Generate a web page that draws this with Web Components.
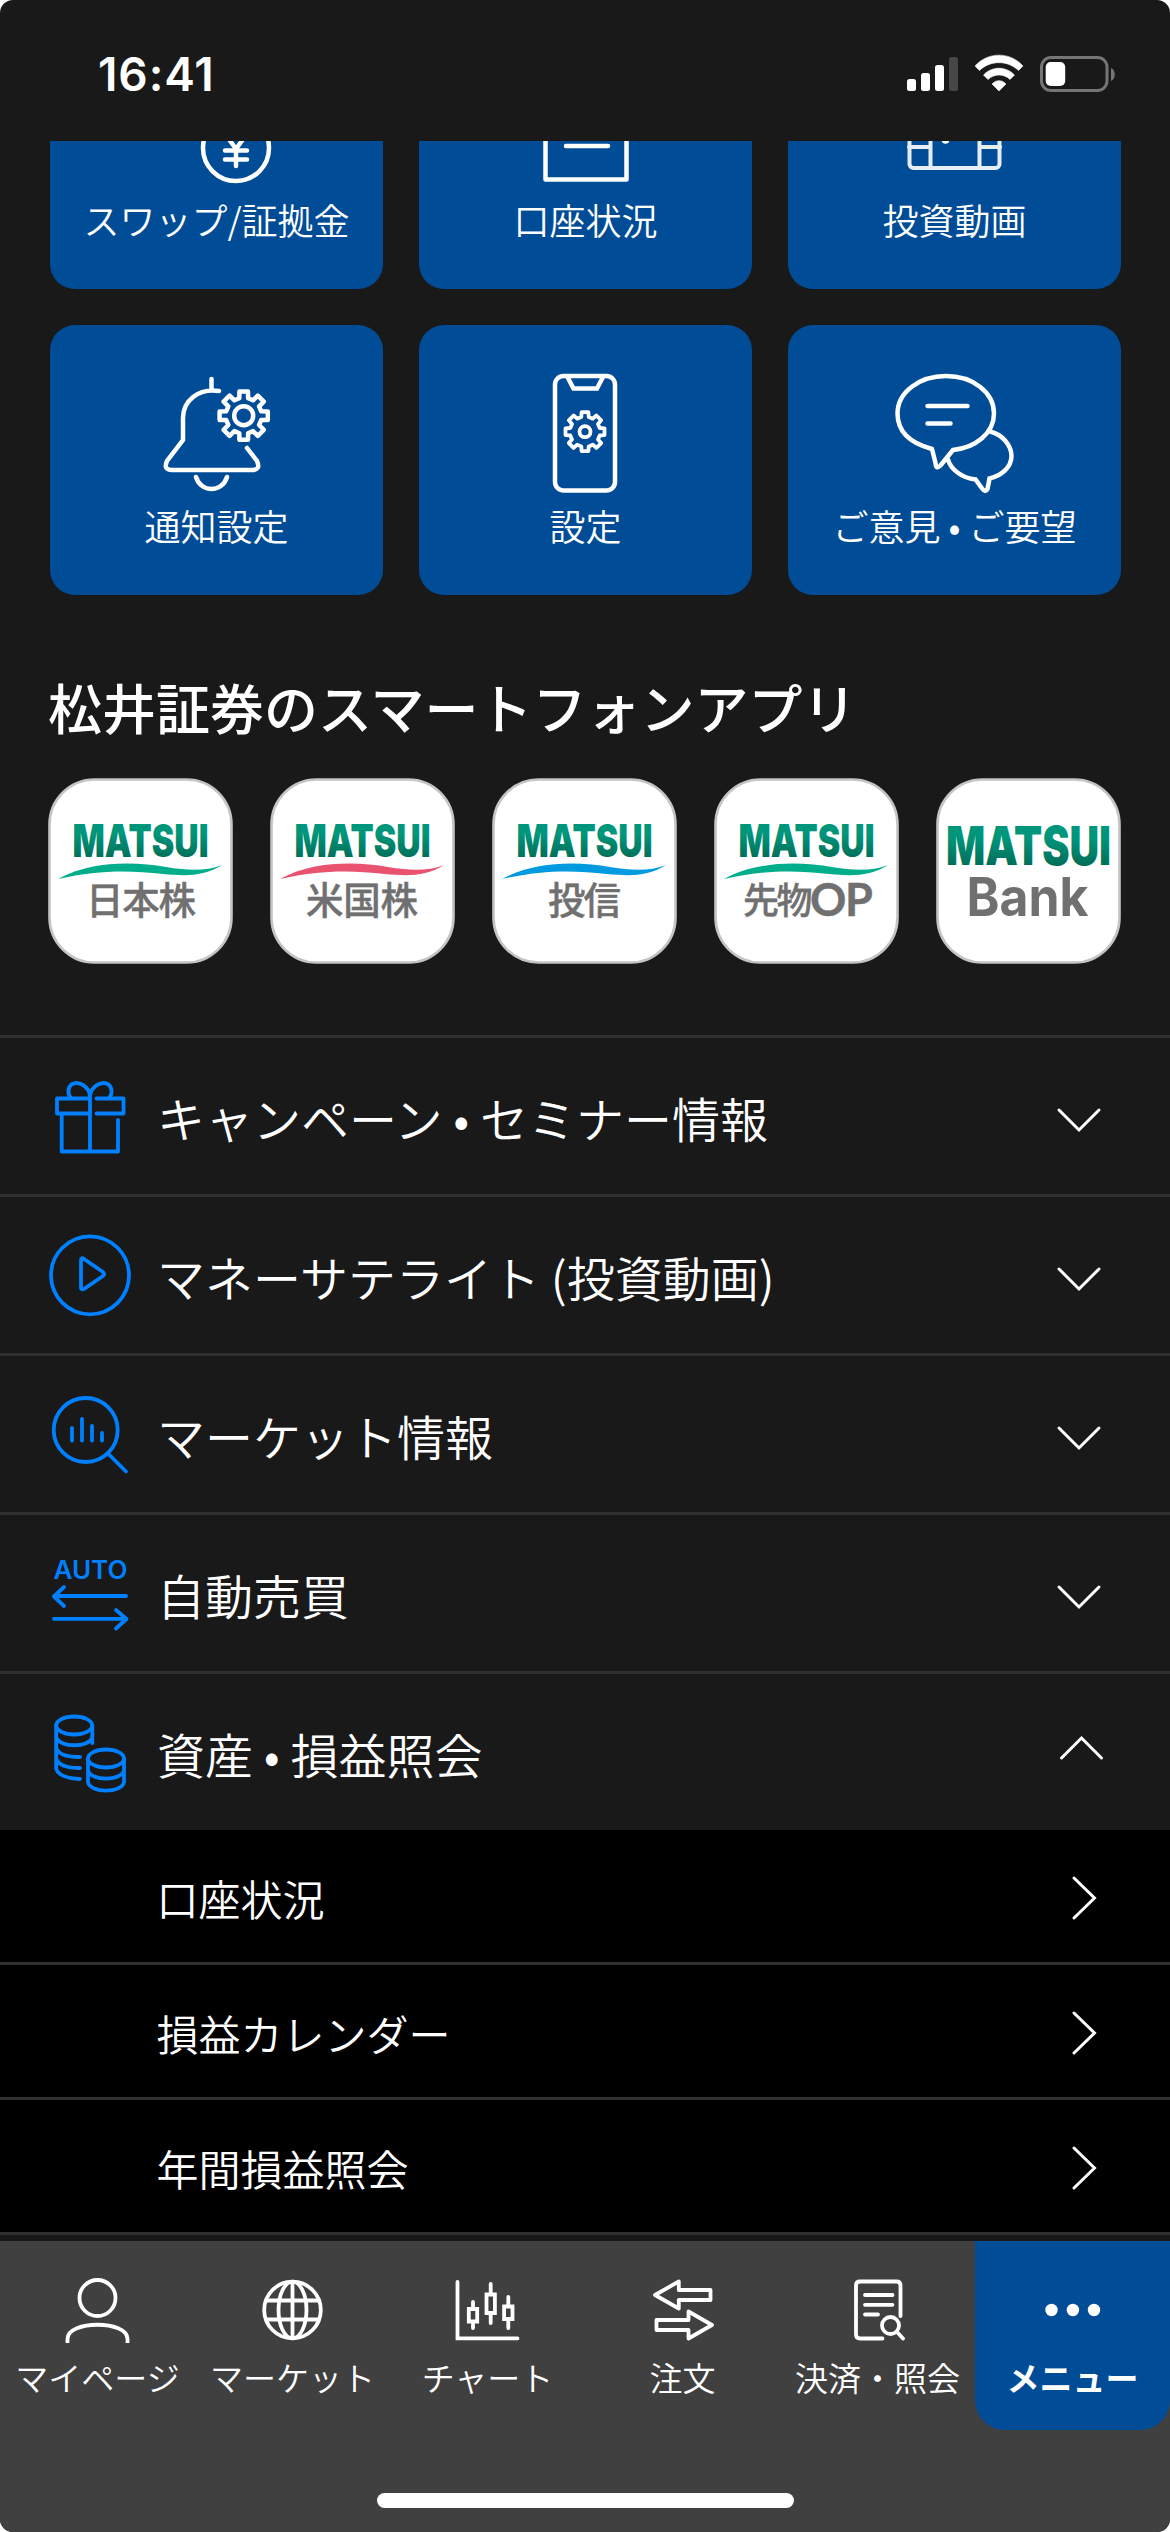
<!DOCTYPE html>
<html lang="ja">
<head>
<meta charset="utf-8">
<title>メニュー</title>
<style>
html,body{margin:0;background:#fff}
body{font-family:"Noto Sans CJK JP","Noto Sans",sans-serif;color:#fff}
</style>
</head>
<body>
<fx-screen>
  <fx-status slot="status" time="16:41"></fx-status>
  <fx-grid>
    <fx-card label="スワップ/証拠金"><svg viewBox="50 19 333 170"><circle cx="236" cy="148" r="33"/><path d="M226 135l10 14 10-14M236 149v17M225 150.500h22M225 159.500h22"/></svg></fx-card>
    <fx-card label="口座状況"><svg viewBox="419 19 333 170"><path d="M545.500 110H626.500V179.500H545.500ZM566 146h42" stroke-linejoin="round"/></svg></fx-card>
    <fx-card label="投資動画"><svg viewBox="788 19 333 170"><g opacity=".9" stroke-width="4"><rect x="909.500" y="100" width="90" height="68" rx="4"/><path d="M930.500 100V168M979.500 100V168M909 147h21M980 147h20"/></g><circle cx="945.500" cy="140" r="1.500"/></svg></fx-card>
    <fx-card label="通知設定"><svg viewBox="50 325 333 170"><path d="M211.500 379V390M219 391C198 388 183 401 183 418V440L167 461Q163 470 172 470H252Q261 470 257 461L247 448M196 477C201 493 222 493 227 477"/><g data-gear="243.700 415.700 24.500 18 9.500"></g></svg></fx-card>
    <fx-card label="設定"><svg viewBox="419 325 333 170"><rect x="555" y="376" width="60" height="114.500" rx="8.500"/><path d="M567.500 377L573.500 388.500H597L603 377"/><g stroke-width="3.800" data-gear="585 431.700 19.800 15.200 5.500"></g></svg></fx-card>
    <fx-card label="ご意見 • ご要望"><svg viewBox="787.500 325 333 170"><path d="M931.500 449C909 443 897 431 897 413.500C897 392 919 376 945.500 376C972 376 993.500 392 993.500 413.500C993.500 433 975 448 952.500 450L940 465.500Q935.500 470 935 463ZM927 406H967M927 423.500H950M989.500 431.500C1001 434 1011 445 1011 456C1011 467 1001 476 989 478.500L987 489Q985 493 982 489L975 479.500C961 478 950 469 947.500 459.500"/></svg></fx-card>
  </fx-grid>
  <fx-apps heading="松井証券のスマートフォンアプリ">
    <fx-app name="日本株" swoosh="#00ae8c" x="38" w="110"></fx-app>
    <fx-app name="米国株" swoosh="#ea5370" x="36" w="112"></fx-app>
    <fx-app name="投信" swoosh="#009ae0" x="56" w="73"></fx-app>
    <fx-app name="先物" latin="OP" swoosh="#00ae8c" x="29"></fx-app>
    <fx-app name="Bank"></fx-app>
  </fx-apps>
  <fx-row label="キャンペーン • セミナー情報"><svg viewBox="40 1038 100 156"><path d="M90 1151V1096M90 1098.500H57V1113.500H90M96.500 1098.500H123.500V1113.500H96.500M61.700 1114V1151.500H118V1120M90 1096C89 1087 79 1080 71.500 1084.500C67 1088 68 1095 71 1098M90 1096C91 1087 101 1080 108.500 1084.500C113 1088 112 1095 109 1098"/></svg></fx-row>
  <fx-row label="マネーサテライト (投資動画)"><svg viewBox="40 1197 100 156"><circle cx="90" cy="1275.300" r="39"/><path d="M81 1260Q81 1257 84 1259L103 1272Q105 1274 103 1276L84 1289Q81 1290 81 1288Z"/></svg></fx-row>
  <fx-row label="マーケット情報"><svg viewBox="40 1356 100 156"><circle cx="85.700" cy="1430" r="32"/><path d="M108 1453.500L126 1471.500M72 1428V1440.500M82 1419V1440.500M92 1426V1440.500M102 1433V1440.500"/></svg></fx-row>
  <fx-row label="自動売買"><svg viewBox="40 1515 100 156"><text x="53.500" y="1579" textLength="74" lengthAdjust="spacingAndGlyphs" font-family="Inter,sans-serif" font-weight="600" font-size="25" fill="#0080ff" stroke="none">AUTO</text><path d="M54 1596H126M64 1587L54 1596.500L64 1606M54 1618.800H126M116 1610L126.500 1619L116 1628.500"/></svg></fx-row>
  <fx-row label="資産 • 損益照会" open><svg viewBox="40 1674 100 156"><ellipse cx="74.200" cy="1725.500" rx="18" ry="9"/><path d="M56.200 1725.500V1769Q59 1778 80 1779M92.300 1725.500V1743M56.200 1737C59 1748 90 1748 92.300 1737M56.200 1748Q59 1757 80 1757M56.200 1758.500Q59 1768 80 1768M88 1758.300V1782C90 1793.500 122 1793.500 124 1782V1758.300M88 1770C90 1781.500 122 1781.500 124 1770"/><ellipse cx="106" cy="1758.500" rx="18" ry="9"/></svg></fx-row>
  <fx-sub>口座状況</fx-sub>
  <fx-sub>損益カレンダー</fx-sub>
  <fx-sub>年間損益照会</fx-sub>
  <fx-tabs slot="tabs">
    <fx-tab label="マイページ"><svg viewBox="0 2241 195 110"><circle cx="97.500" cy="2298" r="18"/><path d="M67.500 2343V2339C67.500 2320 127.500 2320 127.500 2339V2343"/></svg></fx-tab>
    <fx-tab label="マーケット"><svg viewBox="195 2241 195 110"><circle cx="292.500" cy="2310" r="28.300"/><ellipse cx="292.500" cy="2310" rx="14" ry="28.300"/><path d="M292.500 2282V2338M267 2300.500H318M267 2319.500H318"/></svg></fx-tab>
    <fx-tab label="チャート"><svg viewBox="390 2241 195 110" stroke-linecap="round"><path d="M457.500 2282V2338.300H517.500M473 2302V2308M473 2323V2328M490.700 2284V2293M490.700 2315V2323M508.300 2297V2305M508.300 2321V2328M468.800 2309H477.200V2321.500H468.800ZM486.500 2294.500H494.900V2313H486.500ZM504.100 2306.500H512.500V2319H504.100Z"/></svg></fx-tab>
    <fx-tab label="注文"><svg viewBox="585 2241 195 110" stroke-linejoin="round"><path d="M655 2295L678.800 2281.500V2290H710.500V2300H678.800V2308.500ZM712 2325L688.500 2311.500V2320H656.500V2330H688.500V2338.500Z"/></svg></fx-tab>
    <fx-tab label="決済・照会"><svg viewBox="780 2241 195 110" stroke-linecap="round"><path d="M900.500 2316V2285.500Q900.500 2281.500 896.500 2281.500H860Q856 2281.500 856 2285.500V2334.500Q856 2338.500 860 2338.500H882.500M865 2295H892.500M865 2304.800H892.500M865 2314.500H878M897.500 2332.500L903 2338.500"/><circle cx="890.500" cy="2325.500" r="8.500"/></svg></fx-tab>
    <fx-tab label="メニュー" active><svg viewBox="975 2241 195 110"><g fill="#fff" stroke="none"><circle cx="1051.500" cy="2310" r="6.200"/><circle cx="1072.900" cy="2310" r="6.200"/><circle cx="1094" cy="2310" r="6.200"/></g></svg></fx-tab>
  </fx-tabs>
</fx-screen>
<script>
function define(name, render, after) {
  customElements.define(name, class extends HTMLElement {
    connectedCallback() {
      if (this.shadowRoot) return;
      this.attachShadow({ mode: 'open' }).innerHTML = render(k => this.getAttribute(k), this);
      if (after) after(this);
    }
  });
}

// Rounded eight-tooth cog: "cx cy outerRadius rootRadius holeRadius"
function drawGears(host) {
  host.querySelectorAll('[data-gear]').forEach(g => {
    const [cx, cy, R, r, hole] = g.dataset.gear.split(' ').map(Number);
    let pts = [];
    for (let i = 0; i < 8; i++) {
      const a = i * 45;
      [[-14, r], [-10, R], [10, R], [14, r]].forEach(([d, rad]) => {
        const t = (a + d) * Math.PI / 180;
        pts.push((cx + rad * Math.cos(t)).toFixed(1) + ' ' + (cy + rad * Math.sin(t)).toFixed(1));
      });
    }
    g.innerHTML = `<path stroke-linejoin="round" d="M${pts.join('L')}Z"/><circle cx="${cx}" cy="${cy}" r="${hole}"/>`;
  });
}

define('fx-screen', () => `<style>
:host{display:flex;flex-direction:column;width:1170px;height:2532px;background:#191919;border-radius:13px;overflow:hidden}
main{height:2100px;overflow:hidden;flex:none}
.home{flex:1;background:#404040;display:flex;justify-content:center;align-items:flex-start}
.home i{width:417px;height:15px;border-radius:8px;background:#fff;margin-top:63px}
</style><slot name="status"></slot><main><slot></slot></main><slot name="tabs"></slot><div class="home"><i></i></div>`);

define('fx-status', a => `<style>
:host{display:flex;height:141px;flex:none;box-sizing:border-box;padding:47px 55px 0 98px;justify-content:space-between;align-items:flex-start}
b{font:600 46px/54px Inter,sans-serif;letter-spacing:.9px}
svg{display:block;width:210px;height:40px;margin-top:7px}
</style><b>${a('time')}</b>
<svg viewBox="905 54 210 40"><g fill="#fff"><rect x="907" y="79" width="9" height="12" rx="2.500"/><rect x="921" y="73" width="9" height="18" rx="2.500"/><rect x="935" y="65" width="9" height="26" rx="2.500"/><rect x="949" y="57" width="9" height="34" rx="2.500" fill="#474747"/>
<path d="M975 66C988 51.500 1010 51.500 1023 66L1018.500 70.500C1008 60 990 60 979.500 70.500ZM983.500 75C992 66 1006 66 1014.500 75L1010 79.500C1004 73.500 994 73.500 988 79.500ZM992 84C996 79.500 1002 79.500 1006 84L999 91Z" stroke="#fff" stroke-width=".6" stroke-linejoin="round"/><rect x="1045.700" y="62" width="19.500" height="24" rx="5"/></g>
<rect x="1041.500" y="57.500" width="65.500" height="33" rx="9.500" fill="none" stroke="#757575" stroke-width="3"/><path d="M1111 68C1116 70 1116 79 1111 81Z" fill="#757575"/></svg>`);

define('fx-grid', () => `<style>
:host{display:grid;grid-template-columns:repeat(3,333px);gap:36px;margin:-122px 0 0 50px}
</style><slot></slot>`);

define('fx-card', a => `<style>
:host{display:flex;flex-direction:column;height:270px;border-radius:25px;background:#004c97;text-align:center}
::slotted(svg){display:block;width:333px;height:170px;fill:none;stroke:#fff;stroke-width:4.500px;stroke-linecap:round}
span{font-size:36px;line-height:61px;font-weight:350;white-space:nowrap}
</style><slot></slot><span>${a('label')}</span>`, drawGears);

define('fx-apps', a => `<style>
:host{display:block;padding:74px 48px 71px;height:295px}
h2{margin:0;font-size:54px;line-height:76px;font-weight:500}
div{display:flex;gap:37px;margin-top:33px}
</style><h2>${a('heading')}</h2><div><slot></slot></div>`);

// Condensed brand wordmark: capital height and width are set independently
function wordmark(x, top, height, width) {
  return `<linearGradient id="g" gradientUnits="userSpaceOnUse" x1="0" y1="${top}" x2="0" y2="${top + height}"><stop offset=".3" stop-color="#00967b"/><stop offset="1" stop-color="#00705a"/></linearGradient>
<text x="${x}" y="${top + height}" font-size="${(height / .727).toFixed(2)}" textLength="${width}" lengthAdjust="spacingAndGlyphs" class="m">MATSUI</text>`;
}

define('fx-app', a => {
  let logo;
  if (a('name') === 'Bank') {
    logo = wordmark(10, 47.5, 39, 165) +
      `<text x="30.500" y="137.500" font-family="Inter,sans-serif" font-weight="700" font-size="54" textLength="122" lengthAdjust="spacingAndGlyphs" fill="#707070">Bank</text>`;
  } else {
    const caption = a('latin')
      ? `<text x="${a('x')}" y="135.500" class="c" font-size="36" letter-spacing="-2.500">${a('name')}<tspan dy="2" font-family="Lato,sans-serif" font-weight="700" font-size="45" letter-spacing="-1.500">${a('latin')}</tspan></text>`
      : `<text x="${a('x')}" y="135.500" class="c" font-size="37.500" textLength="${a('w')}" lengthAdjust="spacing">${a('name')}</text>`;
    logo = wordmark(24.5, 46.5, 32.5, 136) +
      `<path d="M10 101C45 82 88 84 118 89C142 93 158 93 174 87C155 99 137 98 115 96C80 92 50 92 10 101Z" fill="${a('swoosh')}"/>` + caption;
  }
  return `<style>
:host{display:block;width:185px;height:186px;flex:none}
svg{display:block}
.m{font-family:Inter,sans-serif;font-weight:900;fill:url(#g)}
.c{font-family:"Noto Sans CJK JP",sans-serif;font-weight:500;fill:#707070;stroke:#707070;stroke-width:.4px}
</style><svg width="185" height="186" viewBox="0 0 185 186"><rect x="1.500" y="1.500" width="182" height="183" rx="45" fill="#fff" stroke="#c4c4c4" stroke-width="2.600"/>${logo}</svg>`;
});

define('fx-row', (a, el) => `<style>
:host{display:flex;height:159px;box-sizing:border-box;border-top:3px solid #303030;align-items:center;padding-left:40px}
::slotted(svg){display:block;width:100px;height:156px;flex:none;fill:none;stroke:#0080ff;stroke-width:3.800px;stroke-linecap:round;stroke-linejoin:round}
span{flex:1;margin-left:17px;font-size:48px;line-height:70px;padding-top:2px;font-weight:350;white-space:nowrap}
.v{width:110px;height:156px;fill:none;stroke:#fff;stroke-width:3px;stroke-linecap:round;overflow:visible}
</style><slot></slot><span>${a('label')}</span>
<svg class="v" viewBox="1060 1038 110 156"><path d="${el.hasAttribute('open') ? 'M1061.500 1122L1081.500 1102L1101.500 1122' : 'M1059 1110L1079 1130L1099 1110'}"/></svg>`);

define('fx-sub', () => `<style>
:host{display:flex;height:135px;box-sizing:border-box;border-bottom:3px solid #303030;background:#000;align-items:center;padding-left:156.500px}
span{flex:1;font-size:42px;line-height:60px;padding-top:3px;font-weight:350}
svg{width:110px;height:132px;fill:none;stroke:#fff;stroke-width:3px;stroke-linecap:round}
</style><span><slot></slot></span><svg viewBox="1060 1830 110 132"><path d="M1074 1878L1094.500 1898L1074 1918"/></svg>`);

define('fx-tabs', () => `<style>
:host{display:flex;height:189px;flex:none;background:#404040}
</style><slot></slot>`);

define('fx-tab', (a, el) => `<style>
:host{display:flex;flex-direction:column;width:195px;height:189px;text-align:center;border-radius:0 0 30px 30px;${el.hasAttribute('active') ? 'background:#004c97;' : ''}}
::slotted(svg){display:block;width:195px;height:110px;fill:none;stroke:#fff;stroke-width:3.800px}
span{font-size:33px;line-height:51px;padding-top:1px;white-space:nowrap;font-weight:${el.hasAttribute('active') ? 700 : 350}}
</style><slot></slot><span>${a('label')}</span>`);
</script>
</body>
</html>
